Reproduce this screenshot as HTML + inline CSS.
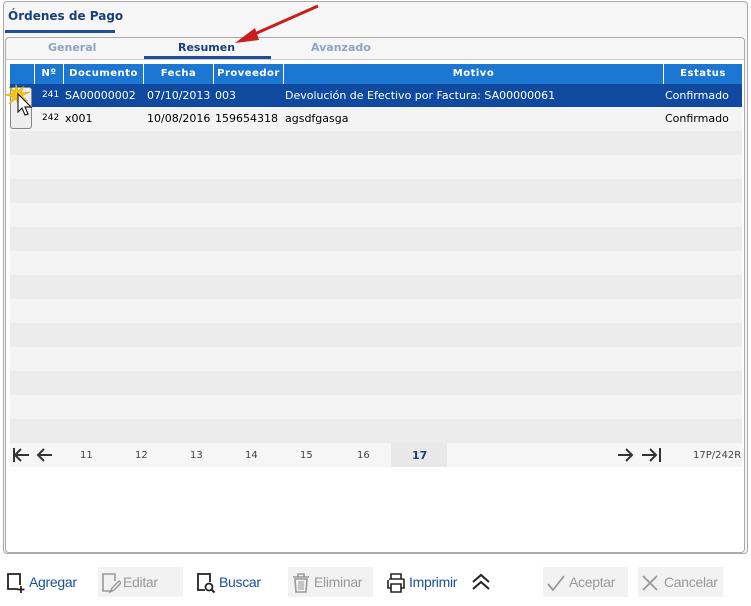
<!DOCTYPE html>
<html><head><meta charset="utf-8"><style>
*{box-sizing:border-box;margin:0;padding:0}
body{width:751px;height:606px;background:#fff;font-family:Verdana,"DejaVu Sans",sans-serif;position:relative;overflow:hidden}
.outer{position:absolute;left:3px;top:1px;width:745px;height:553px;border:1px solid #aaa;border-radius:4px;background:#f6f6f6}
.title{position:absolute;left:4px;top:7px;font-size:12px;font-weight:bold;color:#1a3f7a}
.tline{position:absolute;left:1px;top:28px;width:110px;height:3px;background:#1f4f9a}
.inner{position:absolute;left:5px;top:37px;width:740px;height:516px;border:1px solid #aaa;border-radius:4px;background:#fff}
.tabs{position:absolute;left:0;top:0;width:738px;height:22px;background:#f6f6f6;border-bottom:1px solid #ccc;border-radius:4px 4px 0 0}
.tab{position:absolute;top:3px;font-size:11px;font-weight:bold;color:#8ea4c4}
.abs{position:absolute}
.hdr{position:absolute;left:10px;top:64px;width:732px;height:20px;background:#1c77d2;color:#fff;font-size:10px;font-weight:bold;letter-spacing:.5px}
.hdr div{position:absolute;top:0;height:20px;line-height:20px;text-align:center;border-left:1px solid #fff}
.row{position:absolute;left:10px;width:732px;height:24px;font-size:11px}
.row span{position:absolute;top:5px;white-space:nowrap}
.pg{position:absolute;left:10px;top:443px;width:732px;height:24px;background:#f6f6f6;font-size:10px;color:#444}
.pg span{position:absolute;top:7px}
.btn{position:absolute;top:567px;height:30px;font-size:14px;line-height:30px;font-family:"Liberation Sans",sans-serif;letter-spacing:-.3px}
.dis{background:#f2f2f2;color:#999}
</style></head><body>
<div class="outer">
<div class="title">Órdenes de Pago</div>
<div class="tline"></div>
</div>
<div class="inner">
<div class="tabs">
<div class="tab" style="left:42px">General</div>
<div class="tab" style="left:172px;color:#1a3f7a">Resumen</div>
<div class="tab" style="left:305px">Avanzado</div>
<div class="abs" style="left:138px;top:18px;width:127px;height:3px;background:#1f4f9a"></div>
</div>
</div>
<div class="hdr">
<div style="left:0;width:24px;border-left:none"></div>
<div style="left:24px;width:29px">Nº</div>
<div style="left:53px;width:80px">Documento</div>
<div style="left:133px;width:70px">Fecha</div>
<div style="left:203px;width:70px">Proveedor</div>
<div style="left:273px;width:380px">Motivo</div>
<div style="left:653px;width:79px">Estatus</div>
</div>
<div class="row" style="top:84px;background:#0f4aa0;color:#fff;height:23px">
<span style="left:32px;font-size:9px;top:6px">241</span><span style="left:55px">SA00000002</span><span style="left:137px">07/10/2013</span><span style="left:205px">003</span><span style="left:275px">Devolución de Efectivo por Factura: SA00000061</span><span style="left:655px">Confirmado</span>
</div>
<div class="row" style="top:107px;background:#f4f4f4">
<span style="left:32px;font-size:9px;top:6px">242</span><span style="left:55px">x001</span><span style="left:137px">10/08/2016</span><span style="left:205px">159654318</span><span style="left:275px">agsdfgasga</span><span style="left:655px">Confirmado</span>
</div>
<div class="row" style="top:131px;background:#ececec"></div>
<div class="row" style="top:155px;background:#f4f4f4"></div>
<div class="row" style="top:179px;background:#ececec"></div>
<div class="row" style="top:203px;background:#f4f4f4"></div>
<div class="row" style="top:227px;background:#ececec"></div>
<div class="row" style="top:251px;background:#f4f4f4"></div>
<div class="row" style="top:275px;background:#ececec"></div>
<div class="row" style="top:299px;background:#f4f4f4"></div>
<div class="row" style="top:323px;background:#ececec"></div>
<div class="row" style="top:347px;background:#f4f4f4"></div>
<div class="row" style="top:371px;background:#ececec"></div>
<div class="row" style="top:395px;background:#f4f4f4"></div>
<div class="row" style="top:419px;background:#ececec"></div>
<div class="abs" style="left:10px;top:87px;width:22px;height:42px;border:1px solid #888;border-radius:3px;background:#eee"></div>
<svg class="abs" style="left:4px;top:82px" width="34" height="40" viewBox="0 0 34 40">
<polygon points="12,2 14,9 20,4 17,11 26,10 18,14 24,19 16,17 15,24 12,17 5,22 9,15 1,13 9,11 5,5 11,9" fill="#f5c518" stroke="#d9a000" stroke-width=".5"/>
<path d="M14 12 L14 30 L18 26 L21 33 L24 32 L21 25 L27 25 Z" fill="#fff" stroke="#222" stroke-width="1.2"/>
</svg>
<div class="pg">
<svg class="abs" style="left:2px;top:4px" width="48" height="16" viewBox="0 0 48 16"><g stroke="#333" stroke-width="2" fill="none"><path d="M2 1v14M3 8h14M9 2L3 8l6 6"/><path d="M26 8h14M32 2l-6 6 6 6"/></g></svg>
<span style="left:70px">11</span><span style="left:125px">12</span><span style="left:180px">13</span><span style="left:235px">14</span><span style="left:290px">15</span><span style="left:347px">16</span>
<div class="abs" style="left:381px;top:0;width:56px;height:24px;background:#e8e8e8"></div>
<span style="left:402px;font-weight:bold;color:#1a3f7a;font-size:11px;top:6px">17</span>
<svg class="abs" style="left:606px;top:4px" width="48" height="16" viewBox="0 0 48 16"><g stroke="#333" stroke-width="2" fill="none"><path d="M2 8h14M10 2l6 6-6 6"/><path d="M26 8h14M34 2l6 6-6 6M44 1v14"/></g></svg>
<span style="left:683px">17P/242R</span>
</div>
<div class="btn" style="left:5px;color:#1a4f9a"><svg class="abs" style="left:1px;top:5px" width="20" height="22" viewBox="0 0 20 22"><path d="M12 17H2V2h12v11" fill="none" stroke="#222" stroke-width="1.8"/><path d="M15 14v7M11.5 17.5h7" stroke="#222" stroke-width="1.8"/></svg><span class="abs" style="left:24px">Agregar</span></div>
<div class="btn dis" style="left:98px;width:85px"><svg class="abs" style="left:3px;top:5px" width="20" height="22" viewBox="0 0 20 22"><path d="M9 19H2V2h12v7" fill="none" stroke="#999" stroke-width="1.6"/><path d="M9 20l2-4 7-7 2 2-7 7z" fill="none" stroke="#999" stroke-width="1.4"/></svg><span class="abs" style="left:25px">Editar</span></div>
<div class="btn" style="left:195px;color:#1a4f9a"><svg class="abs" style="left:1px;top:5px" width="22" height="24" viewBox="0 0 22 24"><path d="M9 18H2V2h12v8" fill="none" stroke="#222" stroke-width="1.8"/><circle cx="13" cy="15" r="3.5" fill="none" stroke="#222" stroke-width="1.8"/><path d="M15.5 17.5l3 3" stroke="#222" stroke-width="2"/></svg><span class="abs" style="left:24px">Buscar</span></div>
<div class="btn dis" style="left:288px;width:85px"><svg class="abs" style="left:3px;top:5px" width="20" height="22" viewBox="0 0 20 22"><path d="M2 5h16M7 5V2h6v3M4 7h12l-1 13H5z" fill="none" stroke="#999" stroke-width="1.6"/><path d="M8 9v9M10 9v9M12 9v9" stroke="#999"/></svg><span class="abs" style="left:26px">Eliminar</span></div>
<div class="btn" style="left:385px;color:#1a4f9a"><svg class="abs" style="left:1px;top:5px" width="20" height="22" viewBox="0 0 20 22"><path d="M5 7V2h10v5M3 7h14a1 1 0 011 1v8h-3M5 16H2V8M5 12h10v8H5z" fill="none" stroke="#222" stroke-width="1.6"/></svg><span class="abs" style="left:24px">Imprimir</span>
<svg class="abs" style="left:86px;top:6px" width="20" height="18" viewBox="0 0 20 18"><path d="M2 9l8-7 8 7M2 16l8-7 8 7" fill="none" stroke="#222" stroke-width="2"/></svg></div>
<div class="btn dis" style="left:543px;width:85px"><svg class="abs" style="left:3px;top:7px" width="20" height="18" viewBox="0 0 20 18"><path d="M2 10l5 6L18 2" fill="none" stroke="#999" stroke-width="1.8"/></svg><span class="abs" style="left:26px">Aceptar</span></div>
<div class="btn dis" style="left:638px;width:85px"><svg class="abs" style="left:3px;top:7px" width="18" height="18" viewBox="0 0 18 18"><path d="M2 2l14 14M16 2L2 16" stroke="#999" stroke-width="1.8"/></svg><span class="abs" style="left:26px">Cancelar</span></div>
<svg class="abs" style="left:225px;top:2px" width="100" height="45" viewBox="0 0 100 45"><path d="M93 4L25 34" stroke="#c81e1e" stroke-width="3"/><polygon points="10,41 30,26 34,38" fill="#c81e1e"/></svg>
</body></html>
